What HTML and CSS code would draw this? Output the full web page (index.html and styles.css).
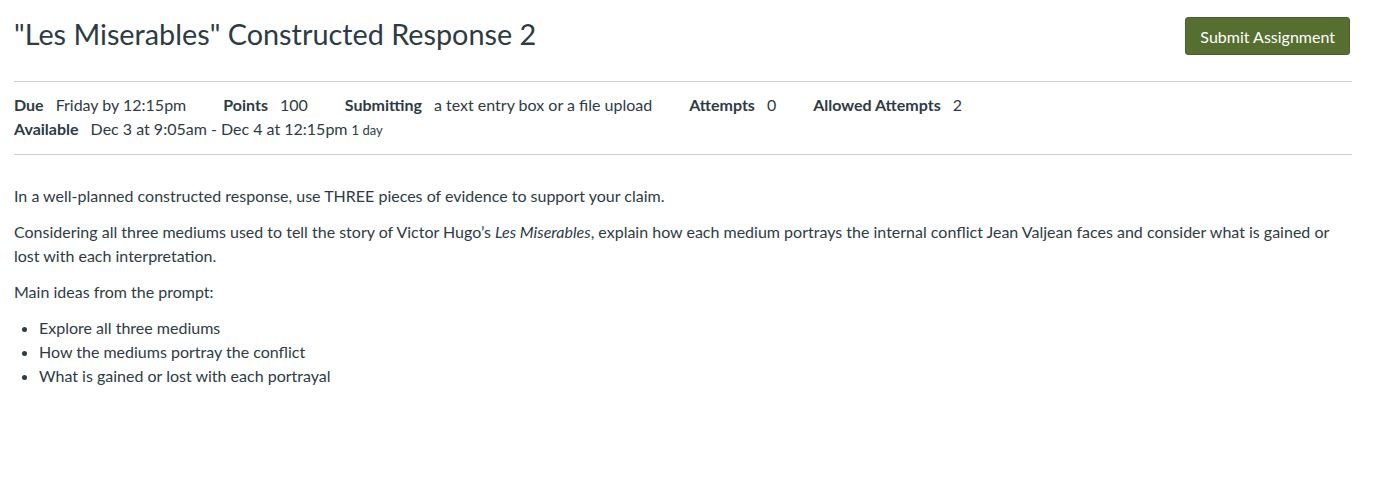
FILE: index.html
```html
<!DOCTYPE html>
<html>
<head>
<meta charset="utf-8">
<link rel="stylesheet" href="styles.css">
</head>
<body>
<div class="page">
  <div class="header">
    <h1 class="title">"Les Miserables" Constructed Response 2</h1>
    <button class="submit-btn">Submit Assignment</button>
  </div>
  <div class="details">
    <div class="row">
      <span class="item"><span class="label">Due</span><span class="value">Friday by 12:15pm</span></span>
      <span class="item"><span class="label">Points</span><span class="value">100</span></span>
      <span class="item"><span class="label">Submitting</span><span class="value">a text entry box or a file upload</span></span>
      <span class="item"><span class="label">Attempts</span><span class="value">0</span></span>
      <span class="item"><span class="label">Allowed Attempts</span><span class="value">2</span></span>
    </div>
    <div class="row">
      <span class="item"><span class="label">Available</span><span class="value">Dec 3 at 9:05am - Dec 4 at 12:15pm <span class="small">1 day</span></span></span>
    </div>
  </div>
  <div class="description">
    <p>In a well-planned constructed response, use THREE pieces of evidence to support your claim.</p>
    <p>Considering all three mediums used to tell the story of Victor Hugo’s <em>Les Miserables</em>, explain how each medium portrays the internal conflict Jean Valjean faces and consider what is gained or lost with each interpretation.</p>
    <p>Main ideas from the prompt:</p>
    <ul>
      <li>Explore all three mediums</li>
      <li>How the mediums portray the conflict</li>
      <li>What is gained or lost with each portrayal</li>
    </ul>
  </div>
</div>
</body>
</html>
```

FILE: styles.css
```css
html, body {
  margin: 0;
  padding: 0;
  background: #fff;
}
body {
  font-family: Lato, "Liberation Sans", sans-serif;
  color: #2d3b45;
  font-size: 16px;
}
.page {
  padding: 17px 22px 0 14px;
}
.header {
  display: flex;
  justify-content: space-between;
  align-items: flex-start;
  padding-bottom: 26px;
  border-bottom: 1px solid #c7cdd1;
}
.title {
  margin: 0;
  font-weight: 400;
  font-size: 28.8px;
  line-height: 34px;
}
.submit-btn {
  margin-right: 2px;
  height: 38px;
  padding: 0 14px;
  background: #566e30;
  color: #fff;
  border: 1px solid #48602a;
  border-radius: 3px;
  font-family: Lato, "Liberation Sans", sans-serif;
  font-size: 16px;
  font-weight: 400;
}
.details {
  padding: 11px 0 12px;
  border-bottom: 1px solid #c7cdd1;
}
.row {
  display: flex;
  gap: 37px;
  line-height: 24px;
}
.label {
  font-weight: 700;
  margin-right: 12px;
}
.small {
  font-size: 13px;
}
.description {
  padding-top: 29px;
  line-height: 24px;
}
.description p {
  margin: 0 0 12px;
}
.description ul {
  margin: 0;
  padding-left: 25px;
}
```
